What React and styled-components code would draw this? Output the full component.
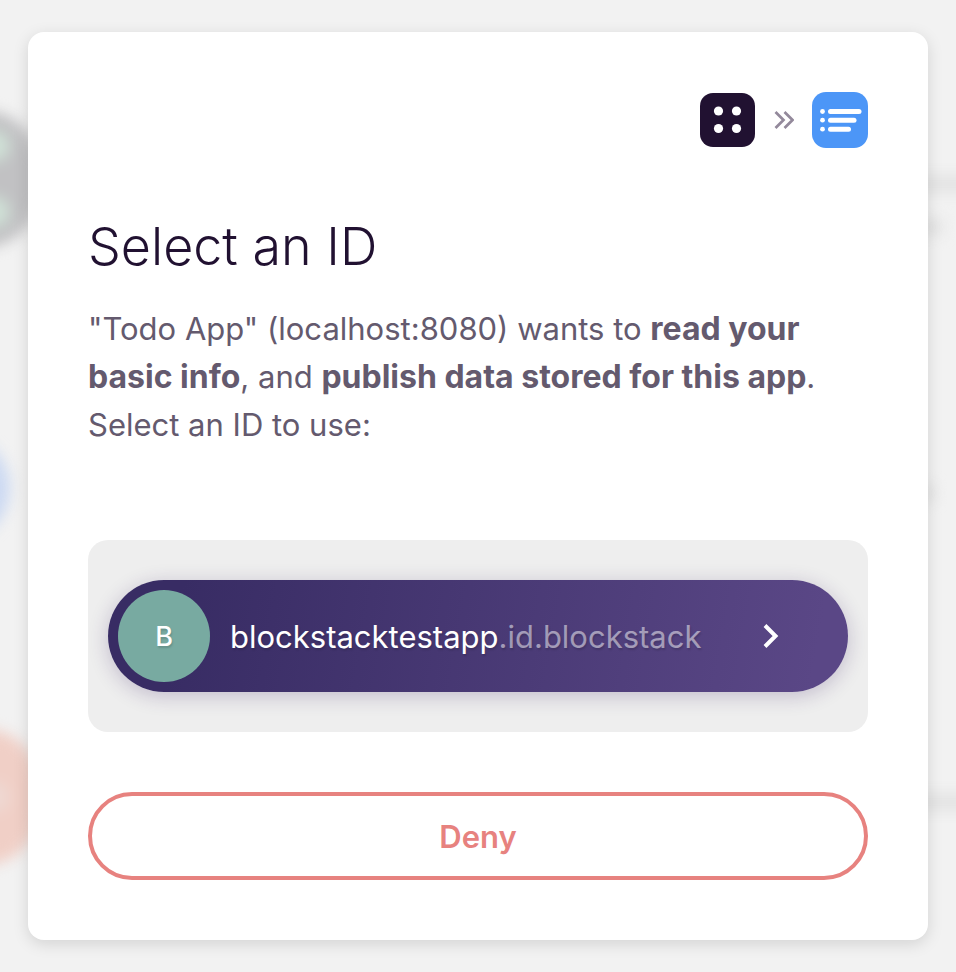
import React from "react";
import styled, { createGlobalStyle } from "styled-components";

const GlobalStyle = createGlobalStyle`
  *, *::before, *::after {
    box-sizing: border-box;
  }

  body {
    margin: 0;
    background: #f2f2f2;
    font-family: Inter, "Liberation Sans", sans-serif;
    -webkit-font-smoothing: antialiased;
  }
`;

const Page = styled.div`
  position: relative;
  min-height: 100vh;
  padding: 32px 28px;
  overflow: hidden;
`;

// Blurred list of apps behind the dialog
const Backdrop = styled.div`
  position: absolute;
  inset: 0;
  display: grid;
  grid-auto-rows: 309px;
  padding-top: 24px;
  filter: blur(7px);
`;

const AppRow = styled.div`
  display: flex;
  align-items: center;
  justify-content: space-between;
  margin: 0 -98px;
`;

const AppTile = styled.div`
  display: flex;
  flex-direction: column;
  align-items: flex-end;
  justify-content: center;
  gap: 34px;
  width: ${({ $size }) => $size}px;
  height: ${({ $size }) => $size}px;
  padding-right: 28px;
  border-radius: 54px;
  background: ${({ $color }) => $color};
`;

const TileDot = styled.div`
  width: 32px;
  height: 32px;
  border-radius: 50%;
  background: ${({ $color }) => $color};
`;

const AppLines = styled.div`
  display: flex;
  flex-direction: column;
  gap: 27px;
  width: 200px;
  height: 26px;
  padding-top: 10px;
`;

const AppLine = styled.div`
  flex-shrink: 0;
  width: ${({ $width }) => $width}px;
  height: 16px;
  background: #e2e2e2;
`;

const Card = styled.main`
  position: relative;
  padding: 60px;
  border-radius: 16px;
  background: #fff;
  box-shadow: 0 4px 16px rgba(0, 0, 0, 0.13);
`;

const Header = styled.header`
  display: flex;
  align-items: center;
  justify-content: flex-end;
  gap: 18px;
  height: 56px;
  margin-bottom: 64px;
`;

const Title = styled.h1`
  margin: 0 0 24px;
  color: #211131;
  font-size: 52px;
  font-weight: 300;
  line-height: 69px;
`;

const Description = styled.p`
  margin: 0 0 91px;
  color: #645a6e;
  font-size: 31px;
  line-height: 48px;

  strong {
    font-size: 32px;
    font-weight: 700;
    line-height: 1;
  }
`;

const AccountList = styled.div`
  margin-bottom: 60px;
  padding: 40px 20px;
  border-radius: 20px;
  background: #eee;
`;

const AccountButton = styled.button`
  display: flex;
  align-items: center;
  gap: 20px;
  width: 100%;
  height: 112px;
  padding: 0 69px 0 10px;
  border: none;
  border-radius: 56px;
  background: linear-gradient(100deg, #382c64 10%, #5a4786 95%);
  box-shadow: 0 4px 20px rgba(56, 28, 96, 0.24);
  color: #fff;
  font: inherit;
  font-size: 31px;
  text-align: left;
  text-shadow: 1px 2px 2px rgba(0, 0, 0, 0.15);
  cursor: pointer;
`;

const Avatar = styled.span`
  display: flex;
  align-items: center;
  justify-content: center;
  flex-shrink: 0;
  width: 92px;
  height: 92px;
  border-radius: 50%;
  background: #78aaa1;
  font-size: 27px;
  font-weight: 500;
`;

const AccountName = styled.span`
  flex: 1;
`;

const Domain = styled.span`
  color: rgba(255, 255, 255, 0.5);
`;

const DenyButton = styled.button`
  display: block;
  width: 100%;
  height: 88px;
  border: 4px solid #e7827f;
  border-radius: 44px;
  background: #fff;
  color: #e7827f;
  font: inherit;
  font-size: 31px;
  font-weight: 600;
  cursor: pointer;
`;

const BlockstackIcon = () => (
  <svg width="56" height="56" viewBox="0 0 56 56" aria-hidden="true">
    <rect x="0" y="1" width="55" height="54" rx="13" fill="#211131" />
    <g fill="#fff">
      <circle cx="18.5" cy="19" r="4.6" />
      <circle cx="36.5" cy="19" r="4.6" />
      <circle cx="18.5" cy="36.5" r="4.6" />
      <circle cx="36.5" cy="36.5" r="4.6" />
    </g>
  </svg>
);

const DoubleChevron = () => (
  <svg
    width="20"
    height="20"
    viewBox="0 0 20 20"
    fill="none"
    stroke="#93899b"
    strokeWidth="2.7"
    aria-hidden="true"
  >
    <path d="M1.5 2l8 8-8 8M10.5 2l8 8-8 8" />
  </svg>
);

const TodoIcon = () => (
  <svg width="56" height="56" viewBox="0 0 56 56" aria-hidden="true">
    <rect width="56" height="56" rx="14" fill="#4c96f7" />
    <g fill="#fff">
      <circle cx="10.5" cy="19.5" r="2.4" />
      <circle cx="10.5" cy="28.2" r="2.4" />
      <circle cx="10.5" cy="37.2" r="2.4" />
      <rect x="16" y="17" width="33.5" height="5" rx="2.5" />
      <rect x="16" y="25.7" width="28.5" height="5" rx="2.5" />
      <rect x="16" y="34.7" width="23" height="5" rx="2.5" />
    </g>
  </svg>
);

const Chevron = () => (
  <svg
    width="16"
    height="24"
    viewBox="0 0 16 24"
    fill="none"
    stroke="#fff"
    strokeWidth="4"
    aria-hidden="true"
  >
    <path d="M2 1.5L12.5 12 2 22.5" />
  </svg>
);

const accounts = [{ name: "blockstacktestapp", domain: ".id.blockstack" }];

const apps = [
  { color: "#c1c1c3", size: 136, dots: ["#cfe0d6", "#cfe0d6"], lines: [200, 88] },
  { color: "#ccd9f2", size: 108, dots: [], lines: [80] },
  { color: "#f0cfc6", size: 136, dots: ["#efd8d2"], lines: [200] },
];

const App = () => {
  return (
    <Page>
      <GlobalStyle />
      <Backdrop aria-hidden="true">
        {apps.map((app) => (
          <AppRow key={app.color}>
            <AppTile $size={app.size} $color={app.color}>
              {app.dots.map((dot, index) => (
                <TileDot key={index} $color={dot} />
              ))}
            </AppTile>
            <AppLines>
              {app.lines.map((width) => (
                <AppLine key={width} $width={width} />
              ))}
            </AppLines>
          </AppRow>
        ))}
      </Backdrop>
      <Card>
        <Header>
          <BlockstackIcon />
          <DoubleChevron />
          <TodoIcon />
        </Header>
        <Title>Select an ID</Title>
        <Description>
          "Todo App" (localhost:8080) wants to <strong>read your basic info</strong>
          , and <strong>publish data stored for this app</strong>. Select an ID to
          use:
        </Description>
        <AccountList>
          {accounts.map((account) => (
            <AccountButton key={account.name} type="button">
              <Avatar>{account.name[0].toUpperCase()}</Avatar>
              <AccountName>
                {account.name}
                <Domain>{account.domain}</Domain>
              </AccountName>
              <Chevron />
            </AccountButton>
          ))}
        </AccountList>
        <DenyButton type="button">Deny</DenyButton>
      </Card>
    </Page>
  );
};

export default App;
